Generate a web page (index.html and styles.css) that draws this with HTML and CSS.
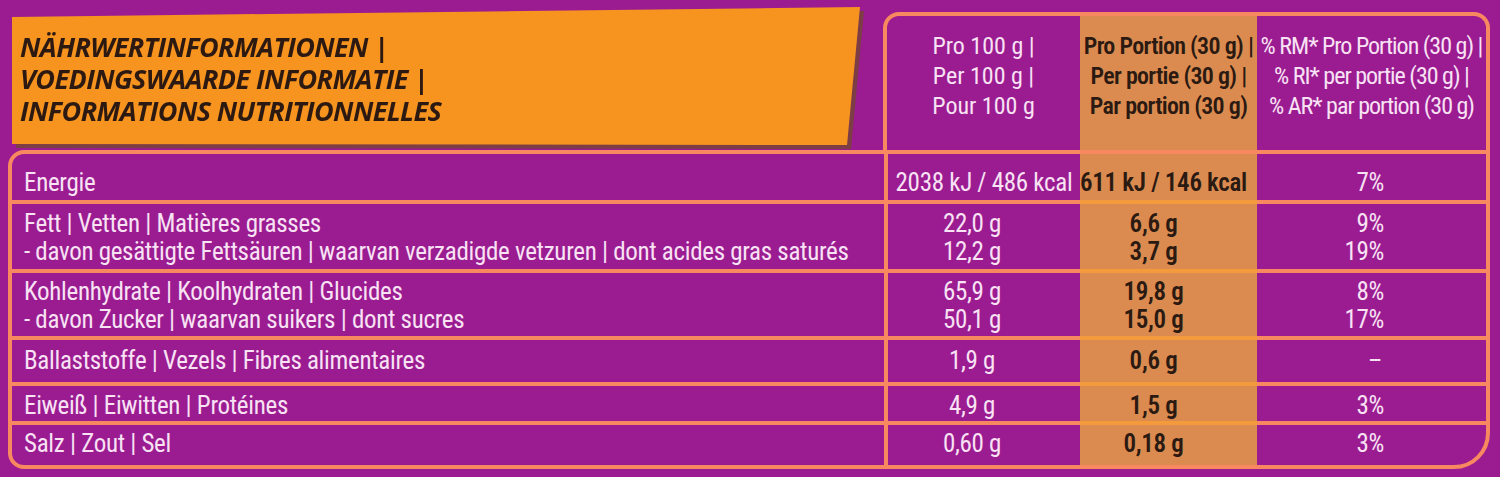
FILE: index.html
```html
<!DOCTYPE html>
<html lang="de">
<head>
<meta charset="utf-8">
<title>Nährwertinformationen</title>
<link rel="stylesheet" href="styles.css">
</head>
<body>
<div class="label">
  <div class="top">
    <div class="banner-wrap">
      <div class="banner">
        <div class="banner-text">NÄHRWERTINFORMATIONEN |<br>VOEDINGSWAARDE INFORMATIE |<br>INFORMATIONS NUTRITIONNELLES</div>
      </div>
    </div>
    <div class="head-box">
      <div class="hcell">Pro 100 g |<br>Per 100 g |<br>Pour 100 g</div>
      <div class="hcell hl">Pro Portion (30 g) |<br>Per portie (30 g) |<br>Par portion (30 g)</div>
      <div class="hcell ri">% RM* Pro Portion (30 g) |<br>% RI* per portie (30 g) |<br>% AR* par portion (30 g)</div>
    </div>
  </div>
  <div class="table">
    <div class="row r1">
      <div class="c name">Energie</div>
      <div class="c v100 wide">2038 kJ / 486 kcal</div>
      <div class="c vp wide">611 kJ / 146 kcal</div>
      <div class="c pct">7%</div>
    </div>
    <div class="row r2">
      <div class="c name">Fett | Vetten | Matières grasses<br>- davon gesättigte Fettsäuren | waarvan verzadigde vetzuren | dont acides gras saturés</div>
      <div class="c v100">22,0 g<br>12,2 g</div>
      <div class="c vp">6,6 g<br>3,7 g</div>
      <div class="c pct">9%<br>19%</div>
    </div>
    <div class="row r3">
      <div class="c name">Kohlenhydrate | Koolhydraten | Glucides<br>- davon Zucker | waarvan suikers | dont sucres</div>
      <div class="c v100">65,9 g<br>50,1 g</div>
      <div class="c vp">19,8 g<br>15,0 g</div>
      <div class="c pct">8%<br>17%</div>
    </div>
    <div class="row r4">
      <div class="c name">Ballaststoffe | Vezels | Fibres alimentaires</div>
      <div class="c v100">1,9 g</div>
      <div class="c vp">0,6 g</div>
      <div class="c pct dash">–</div>
    </div>
    <div class="row r5">
      <div class="c name">Eiweiß | Eiwitten | Protéines</div>
      <div class="c v100">4,9 g</div>
      <div class="c vp">1,5 g</div>
      <div class="c pct">3%</div>
    </div>
    <div class="row r6">
      <div class="c name">Salz | Zout | Sel</div>
      <div class="c v100">0,60 g</div>
      <div class="c vp">0,18 g</div>
      <div class="c pct">3%</div>
    </div>
  </div>
</div>
</body>
</html>
```
FILE: styles.css
```css
* { box-sizing: border-box; }
html, body { margin: 0; padding: 0; }
body {
  width: 1500px;
  height: 477px;
  overflow: hidden;
  background: #9b1c91;
  font-family: "Roboto Condensed", "Liberation Sans Narrow", Roboto, sans-serif;
  font-stretch: condensed;
  color: #f8e2f4;
}
.label { width: 1500px; }

/* ---------- top area ---------- */
.top {
  display: flex;
  height: 150px;
}
.banner-wrap {
  width: 883px;
  padding: 7px 0 0 12px;
  filter: drop-shadow(4px 4px 0 #7c3d45);
}
.banner {
  width: 848px;
  height: 138px;
  background: #f7931f;
  clip-path: polygon(0 10px, 848px 0, 835px 138px, 0 137px);
  padding: 24px 0 0 8px;
}
.banner-text {
  font-family: "Open Sans", "Noto Sans", sans-serif;
  font-stretch: normal;
  font-weight: 700;
  font-style: italic;
  font-size: 27px;
  line-height: 32px;
  letter-spacing: -0.6px;
  color: #2c1a12;
}
.head-box {
  margin-top: 12px;
  width: 607px;
  height: 138px;
  border: 4px solid #f7885f;
  border-bottom: 0;
  border-radius: 16px 16px 0 0;
  display: grid;
  grid-template-columns: 193px 177px 229px;
  overflow: hidden;
}
.hcell {
  text-align: center;
  font-size: 24px;
  line-height: 30px;
  padding-top: 15px;
  white-space: nowrap;
}
.hcell.hl {
  background: #dc8b50;
  color: #2b1a12;
  font-weight: 600;
  letter-spacing: -0.7px;
}
.hcell.ri { letter-spacing: -1px; }

/* ---------- table ---------- */
.table {
  margin-left: 8px;
  width: 1482px;
  border: 4px solid #f7885f;
  border-radius: 16px 0 36px 16px;
  overflow: hidden;
}
.row {
  display: grid;
  grid-template-columns: 872px 196px 177px 229px;
}
.row + .row .c { border-top: 4px solid #f7885f; }
.row + .row .c.vp { border-top-color: #f39a3c; }
.c {
  font-size: 25px;
  line-height: 28px;
  letter-spacing: -0.3px;
  white-space: nowrap;
}
.name { padding-left: 12px; }
.v100 {
  border-left: 4px solid #f7885f;
  text-align: center;
  padding-right: 24px;
}
.vp {
  background: #dc8b50;
  color: #2b1a12;
  font-weight: 600;
  text-align: center;
  padding-right: 30px;
}
.c.wide { padding-right: 0; }
.vp.wide { padding-right: 10px; }
.pct {
  text-align: right;
  padding-right: 102px;
}
.pct.dash { padding-right: 104px; }

.r1 .c { height: 46px; padding-top: 15px; }
.r2 .c { height: 69px; padding-top: 6px; }
.r3 .c { height: 67px; padding-top: 5px; }
.r4 .c { height: 46px; padding-top: 7px; }
.r5 .c { height: 39px; padding-top: 6px; }
.r6 .c { height: 44px; padding-top: 5px; }
```
